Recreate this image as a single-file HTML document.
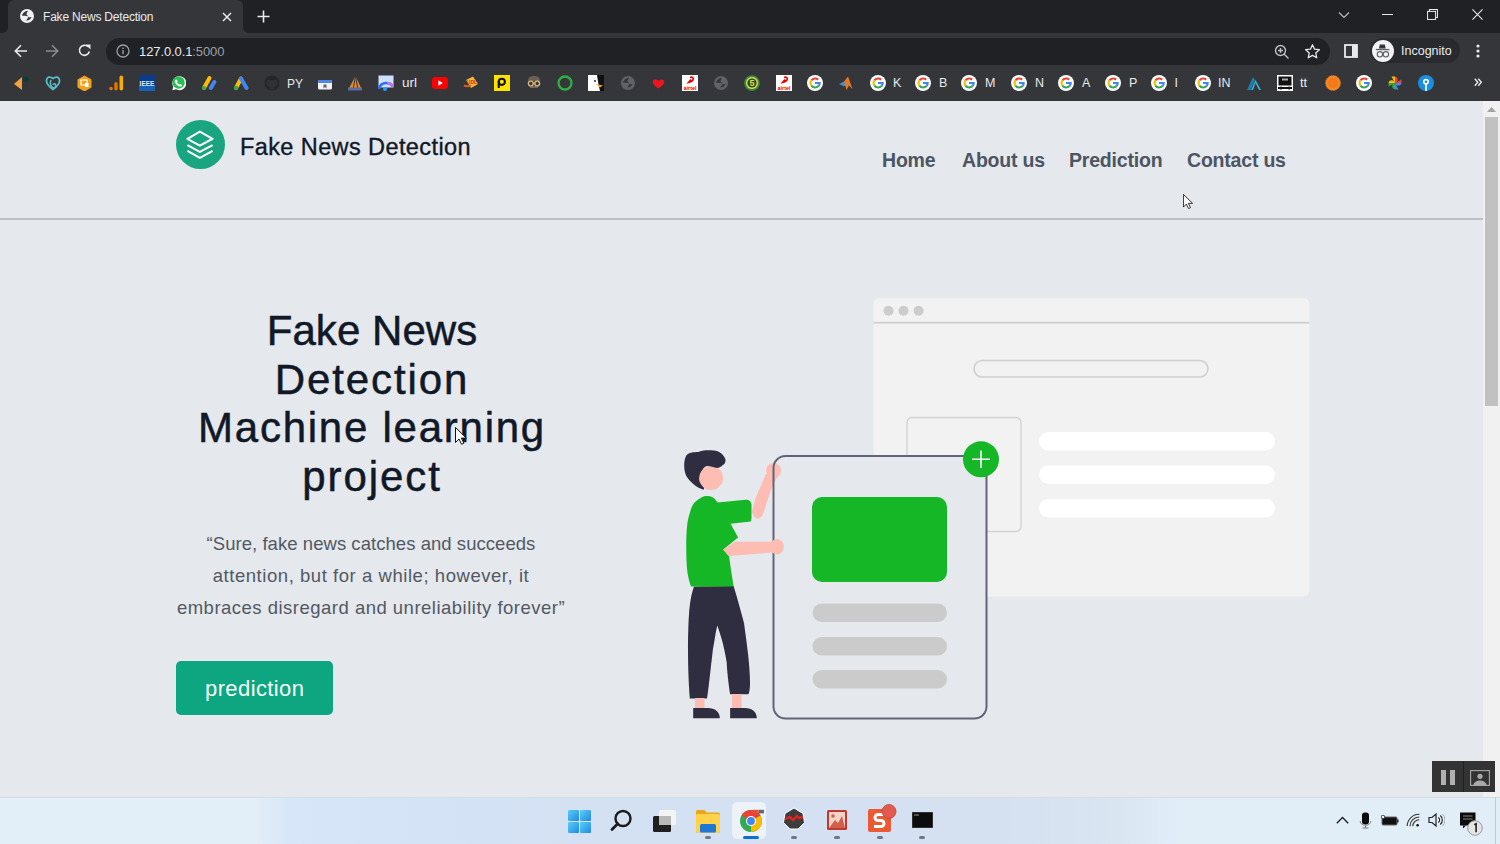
<!DOCTYPE html>
<html><head><meta charset="utf-8">
<style>
*{margin:0;padding:0;box-sizing:border-box}
html,body{width:1500px;height:844px;overflow:hidden;background:#e5e8ec;font-family:"Liberation Sans",sans-serif}
.a{position:absolute}
.t{white-space:nowrap;line-height:1}
#tabs{left:0;top:0;width:1500px;height:34px;background:#202124}
#tab{left:7.6px;top:0;width:235.4px;height:34px;background:#35363a;border-radius:6px 6px 0 0}
#toolbar{left:0;top:33.3px;width:1500px;height:67.7px;background:#35363a}
#omni{left:106px;top:37.5px;width:1224px;height:27px;background:#202124;border-radius:13.5px}
#page{left:0;top:101px;width:1483px;height:696px;background:#e5e8ec;overflow:hidden}
#sb{left:1483px;top:101px;width:17px;height:696px;background:#f1f1f1}
#taskbar{left:0;top:797px;width:1500px;height:47px;background:linear-gradient(90deg,#e2eef8 0px,#e2eef8 255px,#d7e6f8 290px,#d4e3f6 420px,#d4e1f3 600px,#d5e1f1 1000px,#dae5f2 1120px,#e1eef8 1180px,#e1eef8 1500px);border-top:1px solid #d5dde3}
.nav{top:50.3px;font-size:19.5px;font-weight:bold;color:#4b5563;letter-spacing:-0.2px}
.h1{left:172px;width:400px;text-align:center;font-size:42px;line-height:48.67px;color:#111827;-webkit-text-stroke:0.5px #111827;white-space:nowrap}
.q{left:171px;width:400px;text-align:center;font-size:18.5px;line-height:32px;color:#525965;white-space:nowrap}
.bk{top:75px;width:16px;height:16px}
.bt{top:76px;font-size:13px;color:#e8eaed}
</style></head>
<body>
<!-- Tab strip -->
<div id="tabs" class="a"></div>
<div class="a" style="left:0;top:24px;width:252px;height:12px;background:#35363a"></div>
<div class="a" style="left:-12px;top:0;width:19.6px;height:33px;background:#202124;border-radius:0 0 6px 0"></div>
<div class="a" style="left:243px;top:0;width:1270px;height:33.3px;background:#202124;border-radius:0 0 0 6px"></div>
<div id="tab" class="a"></div>
<!-- tab favicon globe -->
<svg class="a" style="left:19.2px;top:8.3px" width="16" height="16" viewBox="0 0 16 16"><circle cx="8" cy="8" r="7" fill="#eef0f1"/><path d="M3.0 7.8C3.3 5.4 5.6 3.2 9.0 2.8 8.6 3.9 7.5 5.0 7.5 6.0 7.5 7.0 8.9 7.6 9.4 8.8 8.4 8.2 6.8 7.7 3.0 7.8z" fill="#35363a"/><path d="M7.0 12.6C7.9 11.6 8.8 10.4 9.0 9.2 10.3 9.3 11.6 9.1 12.5 8.9 12.1 10.8 10.2 12.4 7.0 12.6z" fill="#35363a"/></svg>
<div class="a t" style="left:43px;top:11px;font-size:12px;letter-spacing:-0.2px;color:#e8eaed">Fake News Detection</div>
<svg class="a" style="left:222px;top:12px" width="10" height="10" viewBox="0 0 10 10"><path d="M1 1L9 9M9 1L1 9" stroke="#e8eaed" stroke-width="1.5"/></svg>
<svg class="a" style="left:257px;top:10px" width="13" height="13" viewBox="0 0 13 13"><path d="M6.5 0.5v12M0.5 6.5h12" stroke="#e8eaed" stroke-width="1.6"/></svg>
<!-- window controls -->
<svg class="a" style="left:1337.5px;top:10.5px" width="12" height="8" viewBox="0 0 12 8"><path d="M1 1.5l5 5 5-5" stroke="#b8bcc0" stroke-width="1.2" fill="none"/></svg>
<div class="a" style="left:1382px;top:14px;width:11px;height:1px;background:#e8eaed"></div>
<svg class="a" style="left:1427px;top:9px" width="11" height="11" viewBox="0 0 12 12"><rect x="0.6" y="2.6" width="8.8" height="8.8" fill="none" stroke="#e8eaed" stroke-width="1.1"/><path d="M2.6 2.6V0.6h8.8v8.8H9.4" fill="none" stroke="#e8eaed" stroke-width="1.1"/></svg>
<svg class="a" style="left:1472.3px;top:9px" width="11" height="11" viewBox="0 0 12 12"><path d="M0.5 0.5l11 11M11.5 0.5l-11 11" stroke="#e8eaed" stroke-width="1.2"/></svg>

<div id="toolbar" class="a"></div>
<!-- nav buttons -->
<svg class="a" style="left:14px;top:44px" width="14" height="14" viewBox="0 0 14 14"><path d="M13 7H1.5M7 1.2L1.3 7 7 12.8" stroke="#e8eaed" stroke-width="1.6" fill="none"/></svg>
<svg class="a" style="left:45px;top:44px" width="14" height="14" viewBox="0 0 14 14"><path d="M1 7h11.5M7 1.2L12.7 7 7 12.8" stroke="#8a8c90" stroke-width="1.6" fill="none"/></svg>
<svg class="a" style="left:77px;top:43px" width="15" height="15" viewBox="0 0 15 15"><path d="M12.3 8.5A5 5 0 1 1 11 3.8" stroke="#e8eaed" stroke-width="1.6" fill="none"/><path d="M8.5 1.5h5v5z" fill="#e8eaed"/></svg>
<div id="omni" class="a"></div>
<svg class="a" style="left:116px;top:44px" width="14" height="14" viewBox="0 0 14 14"><circle cx="7" cy="7" r="6" fill="none" stroke="#9aa0a6" stroke-width="1.3"/><rect x="6.3" y="6" width="1.4" height="4.2" fill="#9aa0a6"/><rect x="6.3" y="3.6" width="1.4" height="1.4" fill="#9aa0a6"/></svg>
<div class="a t" style="left:139px;top:44.6px;font-size:13px;letter-spacing:-0.1px;color:#e8eaed">127.0.0.1<span style="color:#9aa0a6">:5000</span></div>
<svg class="a" style="left:1273.5px;top:43.5px" width="16" height="16" viewBox="0 0 16 16"><circle cx="6.5" cy="6.5" r="5" fill="none" stroke="#bdc1c6" stroke-width="1.4"/><path d="M10 10l4.5 4.5M6.5 4v5M4 6.5h5" stroke="#bdc1c6" stroke-width="1.4"/></svg>
<svg class="a" style="left:1304px;top:43px" width="17" height="17" viewBox="0 0 24 24"><path d="M12 2.5l2.9 6.3 6.8.7-5.1 4.6 1.4 6.8L12 17.4l-6 3.5 1.4-6.8-5.1-4.6 6.8-.7z" fill="none" stroke="#e8eaed" stroke-width="1.8" stroke-linejoin="round"/></svg>
<svg class="a" style="left:1344px;top:44px" width="14" height="14" viewBox="0 0 14 14"><rect x="1" y="1" width="12" height="12" fill="none" stroke="#e8eaed" stroke-width="1.8"/><rect x="8" y="1" width="5" height="12" fill="#e8eaed"/></svg>
<div class="a" style="left:1370px;top:38px;width:90px;height:25px;border-radius:13px;background:#292a2d"></div>
<div class="a" style="left:1371.7px;top:39.9px;width:22px;height:22px;border-radius:50%;background:#f1f3f4"></div>
<svg class="a" style="left:1372px;top:40px" width="22" height="22" viewBox="1372 40 22 22"><path d="M1378.9 48.6l.9-4.2h5l.9 4.2z" fill="#35363a"/><rect x="1375.9" y="48.9" width="13.5" height="1.3" fill="#5f6368"/><circle cx="1379.9" cy="54.3" r="2.7" fill="none" stroke="#5f6368" stroke-width="1.1"/><circle cx="1385.9" cy="54.3" r="2.7" fill="none" stroke="#5f6368" stroke-width="1.1"/></svg>
<div class="a t" style="left:1401px;top:44.5px;font-size:12.5px;color:#e8eaed">Incognito</div>
<svg class="a" style="left:1475px;top:43px" width="6" height="16" viewBox="0 0 6 16"><circle cx="3" cy="3" r="1.6" fill="#e8eaed"/><circle cx="3" cy="8" r="1.6" fill="#e8eaed"/><circle cx="3" cy="13" r="1.6" fill="#e8eaed"/></svg>

<!-- bookmarks bar -->
<svg class="a" style="left:13px;top:75px" width="16" height="16" viewBox="0 0 16 16"><path d="M9 2L1 9l8 6z" fill="#f7a13b"/><circle cx="13" cy="4" r="2.6" fill="#0d3b3b"/></svg>
<svg class="a" style="left:45px;top:75px" width="16" height="16" viewBox="0 0 16 16"><path d="M8 14.5C3 11 1 8 1.5 5 2 2 5 1 8 3.5 11 1 14 2 14.5 5 15 8 13 11 8 14.5z" fill="none" stroke="#56c1c8" stroke-width="1.7"/><path d="M6 5c-1 2-1 6 1.5 7.5 2 .8 3.5-.8 3.3-2.3-.3-1.8-2.5-1.7-2.8-.4" fill="none" stroke="#56c1c8" stroke-width="1.5"/></svg>
<svg class="a" style="left:77px;top:75px" width="16" height="16" viewBox="0 0 16 16"><path d="M7.5 0.5l7 4v8l-7 4-7-4v-8z" fill="#f0a21c"/><rect x="4" y="5" width="6" height="5" fill="none" stroke="#fff" stroke-width="1.1"/><rect x="8" y="8" width="3.5" height="4" fill="#fff"/></svg>
<svg class="a" style="left:109px;top:75px" width="16" height="16" viewBox="0 0 16 16"><circle cx="2" cy="13.5" r="1.8" fill="#e37400"/><rect x="5.3" y="7" width="3.4" height="8.5" rx="1.7" fill="#e37400"/><rect x="10.5" y="0.5" width="3.6" height="15" rx="1.8" fill="#f9ab00"/></svg>
<svg class="a" style="left:139px;top:75px" width="16" height="16" viewBox="0 0 16 16"><rect x="0" y="0" width="16" height="16" fill="#0b3b8c"/><rect x="0" y="10" width="16" height="6" fill="#1760b5"/><text x="8" y="10.5" font-size="6.5" font-family="Liberation Sans" font-weight="bold" text-anchor="middle" fill="#dfe8ff">IEEE</text></svg>
<svg class="a" style="left:170px;top:75px" width="16" height="16" viewBox="0 0 16 16"><path d="M2.3 15.2l1-3.5A7 7 0 1 1 6 14.3z" fill="#fff"/><circle cx="8.6" cy="7.6" r="6.1" fill="#25c151"/><path d="M5.8 4.8c.5-.4 1-.3 1.2.2l.6 1.3c.1.4-.4.8-.5 1 .5 1 1.2 1.8 2.3 2.3.3-.2.6-.7 1-.5l1.3.6c.4.2.5.7.1 1.2-.8.9-2 .9-3.2.3C6.7 10 5.3 8.5 4.9 7c-.3-1 .1-1.8.9-2.2z" fill="#fff"/></svg>
<svg class="a" style="left:201px;top:75px" width="16" height="16" viewBox="0 0 16 16"><path d="M3 13L8.5 3" stroke="#fbbc04" stroke-width="4" stroke-linecap="round"/><path d="M9.8 13l3.5-6" stroke="#4285f4" stroke-width="4" stroke-linecap="round"/><circle cx="3" cy="13" r="2" fill="#34a853"/></svg>
<svg class="a" style="left:233px;top:75px" width="16" height="16" viewBox="0 0 16 16"><path d="M3 13L8 3.5" stroke="#fbbc04" stroke-width="4" stroke-linecap="round"/><path d="M8 3.5L13.5 13" stroke="#4285f4" stroke-width="4" stroke-linecap="round"/><circle cx="3" cy="13" r="2.2" fill="#34a853"/></svg>
<svg class="a" style="left:264px;top:75px" width="16" height="16" viewBox="0 0 16 16"><circle cx="8" cy="8" r="7.5" fill="#242526"/><path d="M5.5 14.5v-2.5c-1.5-.2-3-1-3-3.5 0-.8.3-1.5.8-2-.1-.5-.1-1.2.2-2 1 0 1.6.5 2 .8a6 6 0 0 1 5 0c.4-.3 1-.8 2-.8.3.8.3 1.5.2 2 .5.5.8 1.2.8 2 0 2.5-1.5 3.3-3 3.5v2.5" fill="#303134"/></svg>
<div class="a t" style="left:287px;top:77.5px;font-size:12px;color:#e8eaed">PY</div>
<svg class="a" style="left:317px;top:75px" width="16" height="16" viewBox="0 0 16 16"><rect x="1" y="5" width="14" height="9.5" rx="1.5" fill="#f1f3f4"/><rect x="1" y="5" width="14" height="3" rx="1" fill="#4f86e6"/><path d="M6.5 9.5v4l1.5-1.5 1.5 1.5v-4" fill="#5f6368"/></svg>
<svg class="a" style="left:347px;top:75px" width="16" height="16" viewBox="0 0 16 16"><path d="M1 15L8.5 1l6.5 14z" fill="#e4852a"/><path d="M8.5 1L6 15M8.5 1l2.5 14" stroke="#35363a" stroke-width="1"/><rect x="1" y="12.5" width="14" height="3" fill="#5b6da3"/></svg>
<svg class="a" style="left:378px;top:75px" width="16" height="16" viewBox="0 0 16 16"><rect x="0.5" y="0.5" width="15" height="12" fill="#cfe1ff"/><path d="M1 14A7.5 7.5 0 0 1 15 12" stroke="#2a6ef5" stroke-width="2.6" fill="none"/><path d="M9 8.5A5.5 5.5 0 0 1 15 12" stroke="#c372f0" stroke-width="2.6" fill="none"/><circle cx="7" cy="14" r="2" fill="#1fa3ff"/></svg>
<div class="a t" style="left:402px;top:76px;font-size:13.5px;color:#e8eaed">url</div>
<svg class="a" style="left:432px;top:75px" width="16" height="16" viewBox="0 0 16 16"><rect x="0" y="2" width="16" height="12" rx="3.5" fill="#ff0000"/><path d="M6.3 5.2l4.5 2.8-4.5 2.8z" fill="#fff"/></svg>
<svg class="a" style="left:463px;top:75px" width="16" height="16" viewBox="0 0 16 16"><path d="M3 5L10 1.5 15 9 8 13z" fill="#f9b63a"/><path d="M1 10.5c2 1 4 1 7 0" stroke="#e05a1a" stroke-width="2" fill="none"/><text x="9" y="9" font-size="5" fill="#d0301a" font-family="Liberation Sans" font-weight="bold" text-anchor="middle">UDL</text></svg>
<svg class="a" style="left:494px;top:75px" width="16" height="16" viewBox="0 0 16 16"><rect x="0" y="0" width="16" height="16" fill="#ffe100"/><circle cx="7.8" cy="6.8" r="3.1" fill="none" stroke="#111" stroke-width="2"/><rect x="3.7" y="6" width="2.1" height="7" fill="#111"/></svg>
<svg class="a" style="left:526px;top:75px" width="16" height="16" viewBox="0 0 16 16"><path d="M2 6c0-4 3-5 6-5s6 1 6 5" fill="#6b6257"/><circle cx="4.8" cy="8.5" r="2.4" fill="none" stroke="#d9b57a" stroke-width="1.4"/><circle cx="11.2" cy="8.5" r="2.4" fill="none" stroke="#d9b57a" stroke-width="1.4"/><path d="M7 8.5h2" stroke="#d9b57a" stroke-width="1.2"/><path d="M4 12h8" stroke="#a88e62" stroke-width="1.2"/></svg>
<svg class="a" style="left:557px;top:75px" width="16" height="16" viewBox="0 0 16 16"><circle cx="8" cy="8" r="6.5" fill="none" stroke="#2fae44" stroke-width="2.3"/></svg>
<svg class="a" style="left:588px;top:75px" width="16" height="16" viewBox="0 0 16 16"><rect x="0" y="0" width="16" height="16" fill="#fff"/><path d="M9 0h7v16H12C11 12 10 7 9 0z" fill="#111"/><path d="M8 9l7 1.5-3 2z" fill="#f1a225"/><circle cx="7" cy="6" r="0.9" fill="#111"/></svg>
<svg class="a" style="left:620px;top:75px" width="16" height="16" viewBox="0 0 16 16"><circle cx="8" cy="8" r="7" fill="#5f6368"/><path d="M3.0 7.8C3.3 5.4 5.6 3.2 9.0 2.8 8.6 3.9 7.5 5.0 7.5 6.0 7.5 7.0 8.9 7.6 9.4 8.8 8.4 8.2 6.8 7.7 3.0 7.8z" fill="#35363a"/><path d="M7.0 12.6C7.9 11.6 8.8 10.4 9.0 9.2 10.3 9.3 11.6 9.1 12.5 8.9 12.1 10.8 10.2 12.4 7.0 12.6z" fill="#35363a"/></svg>
<svg class="a" style="left:652px;top:77.5px" width="13" height="11" viewBox="0 0 13 11"><path d="M6.5 10.5C2.3 7.6 0.6 5.8 0.8 3.7 1 1.5 3.8 0.6 6.5 2.8c2.7-2.2 5.5-1.3 5.7.9.2 2.1-1.5 3.9-5.7 6.8z" fill="#f0141e"/></svg>
<svg class="a" style="left:682px;top:75px" width="16" height="16" viewBox="0 0 16 16"><rect x="0" y="0" width="16" height="16" fill="#fff"/><path d="M8 2.5c2.5-1 4 .5 3 2.5-.8 1.4-3 2.2-4.5 2.5l2.5-3" stroke="#e40000" stroke-width="1.6" fill="none"/><text x="8" y="14.5" font-size="5.4" font-weight="bold" font-family="Liberation Sans" text-anchor="middle" fill="#e40000">airtel</text></svg>
<svg class="a" style="left:713px;top:75px" width="16" height="16" viewBox="0 0 16 16"><circle cx="8" cy="8" r="7" fill="#5f6368"/><path d="M3.0 7.8C3.3 5.4 5.6 3.2 9.0 2.8 8.6 3.9 7.5 5.0 7.5 6.0 7.5 7.0 8.9 7.6 9.4 8.8 8.4 8.2 6.8 7.7 3.0 7.8z" fill="#35363a"/><path d="M7.0 12.6C7.9 11.6 8.8 10.4 9.0 9.2 10.3 9.3 11.6 9.1 12.5 8.9 12.1 10.8 10.2 12.4 7.0 12.6z" fill="#35363a"/></svg>
<svg class="a" style="left:744px;top:75px" width="16" height="16" viewBox="0 0 16 16"><circle cx="8" cy="8" r="7.8" fill="#3a8f3f"/><circle cx="8" cy="8" r="6" fill="#e8d84a"/><circle cx="8" cy="8" r="4.6" fill="#1e4d2a"/><text x="8" y="11.3" font-size="9" font-weight="bold" font-family="Liberation Sans" text-anchor="middle" fill="#e8d84a">5</text></svg>
<svg class="a" style="left:775.5px;top:75px" width="16" height="16" viewBox="0 0 16 16"><rect x="0" y="0" width="16" height="16" fill="#fff"/><path d="M8 2.5c2.5-1 4 .5 3 2.5-.8 1.4-3 2.2-4.5 2.5l2.5-3" stroke="#e40000" stroke-width="1.6" fill="none"/><text x="8" y="14.5" font-size="5.4" font-weight="bold" font-family="Liberation Sans" text-anchor="middle" fill="#e40000">airtel</text></svg>
<svg class="a" style="left:807px;top:75px" width="16" height="16" viewBox="0 0 16 16"><circle cx="8" cy="8" r="8" fill="#fff"/><path d="M11.2 4.6A4.7 4.7 0 0 0 4.4 5.4" stroke="#ea4335" stroke-width="2.1" fill="none"/><path d="M4.4 5.4A4.7 4.7 0 0 0 4.4 10.6" stroke="#fbbc05" stroke-width="2.1" fill="none"/><path d="M4.4 10.6A4.7 4.7 0 0 0 11.6 11" stroke="#34a853" stroke-width="2.1" fill="none"/><path d="M11.6 11A4.7 4.7 0 0 0 12.7 8H8" stroke="#4285f4" stroke-width="2.1" fill="none"/></svg>
<svg class="a" style="left:838px;top:75px" width="16" height="16" viewBox="0 0 16 16"><path d="M1 9l5-2.5 3 2-3 3z" fill="#3f8fd6"/><path d="M6 6.5L10 1.5 14.5 14 11 10.5 8.5 15z" fill="#e87a1e"/></svg>
<svg class="a" style="left:870px;top:75px" width="16" height="16" viewBox="0 0 16 16"><circle cx="8" cy="8" r="8" fill="#fff"/><path d="M11.2 4.6A4.7 4.7 0 0 0 4.4 5.4" stroke="#ea4335" stroke-width="2.1" fill="none"/><path d="M4.4 5.4A4.7 4.7 0 0 0 4.4 10.6" stroke="#fbbc05" stroke-width="2.1" fill="none"/><path d="M4.4 10.6A4.7 4.7 0 0 0 11.6 11" stroke="#34a853" stroke-width="2.1" fill="none"/><path d="M11.6 11A4.7 4.7 0 0 0 12.7 8H8" stroke="#4285f4" stroke-width="2.1" fill="none"/></svg>
<div class="a t" style="left:893px;top:76.5px;font-size:12.5px;color:#e8eaed">K</div>
<svg class="a" style="left:915px;top:75px" width="16" height="16" viewBox="0 0 16 16"><circle cx="8" cy="8" r="8" fill="#fff"/><path d="M11.2 4.6A4.7 4.7 0 0 0 4.4 5.4" stroke="#ea4335" stroke-width="2.1" fill="none"/><path d="M4.4 5.4A4.7 4.7 0 0 0 4.4 10.6" stroke="#fbbc05" stroke-width="2.1" fill="none"/><path d="M4.4 10.6A4.7 4.7 0 0 0 11.6 11" stroke="#34a853" stroke-width="2.1" fill="none"/><path d="M11.6 11A4.7 4.7 0 0 0 12.7 8H8" stroke="#4285f4" stroke-width="2.1" fill="none"/></svg>
<div class="a t" style="left:939px;top:76.5px;font-size:12.5px;color:#e8eaed">B</div>
<svg class="a" style="left:961px;top:75px" width="16" height="16" viewBox="0 0 16 16"><circle cx="8" cy="8" r="8" fill="#fff"/><path d="M11.2 4.6A4.7 4.7 0 0 0 4.4 5.4" stroke="#ea4335" stroke-width="2.1" fill="none"/><path d="M4.4 5.4A4.7 4.7 0 0 0 4.4 10.6" stroke="#fbbc05" stroke-width="2.1" fill="none"/><path d="M4.4 10.6A4.7 4.7 0 0 0 11.6 11" stroke="#34a853" stroke-width="2.1" fill="none"/><path d="M11.6 11A4.7 4.7 0 0 0 12.7 8H8" stroke="#4285f4" stroke-width="2.1" fill="none"/></svg>
<div class="a t" style="left:985px;top:76.5px;font-size:12.5px;color:#e8eaed">M</div>
<svg class="a" style="left:1011px;top:75px" width="16" height="16" viewBox="0 0 16 16"><circle cx="8" cy="8" r="8" fill="#fff"/><path d="M11.2 4.6A4.7 4.7 0 0 0 4.4 5.4" stroke="#ea4335" stroke-width="2.1" fill="none"/><path d="M4.4 5.4A4.7 4.7 0 0 0 4.4 10.6" stroke="#fbbc05" stroke-width="2.1" fill="none"/><path d="M4.4 10.6A4.7 4.7 0 0 0 11.6 11" stroke="#34a853" stroke-width="2.1" fill="none"/><path d="M11.6 11A4.7 4.7 0 0 0 12.7 8H8" stroke="#4285f4" stroke-width="2.1" fill="none"/></svg>
<div class="a t" style="left:1035px;top:76.5px;font-size:12.5px;color:#e8eaed">N</div>
<svg class="a" style="left:1058px;top:75px" width="16" height="16" viewBox="0 0 16 16"><circle cx="8" cy="8" r="8" fill="#fff"/><path d="M11.2 4.6A4.7 4.7 0 0 0 4.4 5.4" stroke="#ea4335" stroke-width="2.1" fill="none"/><path d="M4.4 5.4A4.7 4.7 0 0 0 4.4 10.6" stroke="#fbbc05" stroke-width="2.1" fill="none"/><path d="M4.4 10.6A4.7 4.7 0 0 0 11.6 11" stroke="#34a853" stroke-width="2.1" fill="none"/><path d="M11.6 11A4.7 4.7 0 0 0 12.7 8H8" stroke="#4285f4" stroke-width="2.1" fill="none"/></svg>
<div class="a t" style="left:1082px;top:76.5px;font-size:12.5px;color:#e8eaed">A</div>
<svg class="a" style="left:1105px;top:75px" width="16" height="16" viewBox="0 0 16 16"><circle cx="8" cy="8" r="8" fill="#fff"/><path d="M11.2 4.6A4.7 4.7 0 0 0 4.4 5.4" stroke="#ea4335" stroke-width="2.1" fill="none"/><path d="M4.4 5.4A4.7 4.7 0 0 0 4.4 10.6" stroke="#fbbc05" stroke-width="2.1" fill="none"/><path d="M4.4 10.6A4.7 4.7 0 0 0 11.6 11" stroke="#34a853" stroke-width="2.1" fill="none"/><path d="M11.6 11A4.7 4.7 0 0 0 12.7 8H8" stroke="#4285f4" stroke-width="2.1" fill="none"/></svg>
<div class="a t" style="left:1129px;top:76.5px;font-size:12.5px;color:#e8eaed">P</div>
<svg class="a" style="left:1151px;top:75px" width="16" height="16" viewBox="0 0 16 16"><circle cx="8" cy="8" r="8" fill="#fff"/><path d="M11.2 4.6A4.7 4.7 0 0 0 4.4 5.4" stroke="#ea4335" stroke-width="2.1" fill="none"/><path d="M4.4 5.4A4.7 4.7 0 0 0 4.4 10.6" stroke="#fbbc05" stroke-width="2.1" fill="none"/><path d="M4.4 10.6A4.7 4.7 0 0 0 11.6 11" stroke="#34a853" stroke-width="2.1" fill="none"/><path d="M11.6 11A4.7 4.7 0 0 0 12.7 8H8" stroke="#4285f4" stroke-width="2.1" fill="none"/></svg>
<div class="a t" style="left:1174.5px;top:76.5px;font-size:12.5px;color:#e8eaed">I</div>
<svg class="a" style="left:1194.5px;top:75px" width="16" height="16" viewBox="0 0 16 16"><circle cx="8" cy="8" r="8" fill="#fff"/><path d="M11.2 4.6A4.7 4.7 0 0 0 4.4 5.4" stroke="#ea4335" stroke-width="2.1" fill="none"/><path d="M4.4 5.4A4.7 4.7 0 0 0 4.4 10.6" stroke="#fbbc05" stroke-width="2.1" fill="none"/><path d="M4.4 10.6A4.7 4.7 0 0 0 11.6 11" stroke="#34a853" stroke-width="2.1" fill="none"/><path d="M11.6 11A4.7 4.7 0 0 0 12.7 8H8" stroke="#4285f4" stroke-width="2.1" fill="none"/></svg>
<div class="a t" style="left:1218px;top:76.5px;font-size:12.5px;color:#e8eaed">IN</div>
<svg class="a" style="left:1246px;top:75px" width="16" height="16" viewBox="0 0 16 16"><path d="M1 15L7 2l2 3-4.5 10z" fill="#1d7fa8"/><path d="M5 15l4.5-10L15 15h-2l-3.5-7L7 15z" fill="#3bb0d8"/></svg>
<svg class="a" style="left:1277px;top:75px" width="16" height="16" viewBox="0 0 16 16"><rect x="0" y="0" width="16" height="16" fill="#fff"/><rect x="1.5" y="1.5" width="13" height="9" fill="#111"/><rect x="5" y="3.5" width="6" height="2" fill="#aaa"/><path d="M1 13h14" stroke="#111" stroke-width="2"/><circle cx="4" cy="13" r="1.5" fill="#111"/><circle cx="12" cy="13" r="1.5" fill="#111"/></svg>
<div class="a t" style="left:1300px;top:76px;font-size:13px;color:#e8eaed">tt</div>
<svg class="a" style="left:1325px;top:75px" width="16" height="16" viewBox="0 0 16 16"><circle cx="8" cy="8" r="7.5" fill="#f08a24" stroke="#d96b18" stroke-width="1" stroke-dasharray="1.5 1"/><circle cx="8" cy="8" r="5.2" fill="#f27a1a"/></svg>
<svg class="a" style="left:1356px;top:75px" width="16" height="16" viewBox="0 0 16 16"><circle cx="8" cy="8" r="8" fill="#fff"/><path d="M11.2 4.6A4.7 4.7 0 0 0 4.4 5.4" stroke="#ea4335" stroke-width="2.1" fill="none"/><path d="M4.4 5.4A4.7 4.7 0 0 0 4.4 10.6" stroke="#fbbc05" stroke-width="2.1" fill="none"/><path d="M4.4 10.6A4.7 4.7 0 0 0 11.6 11" stroke="#34a853" stroke-width="2.1" fill="none"/><path d="M11.6 11A4.7 4.7 0 0 0 12.7 8H8" stroke="#4285f4" stroke-width="2.1" fill="none"/></svg>
<svg class="a" style="left:1387px;top:75px" width="16" height="16" viewBox="0 0 16 16"><path d="M8 8V1.5A3.3 3.3 0 0 1 8 8z" fill="#ea4335"/><path d="M8 8h6.5A3.3 3.3 0 0 1 8 8z" fill="#4285f4"/><path d="M8 8v6.5A3.3 3.3 0 0 1 8 8z" fill="#34a853"/><path d="M8 8H1.5A3.3 3.3 0 0 1 8 8z" fill="#fbbc04"/><path d="M8 8L4.5 1.5 8 1.5z" fill="#fbbc04"/><path d="M8 8L14.5 4.5V8z" fill="#ea4335"/><path d="M8 8l3.5 6.5H8z" fill="#4285f4"/><path d="M8 8L1.5 11.5V8z" fill="#34a853"/></svg>
<svg class="a" style="left:1418px;top:75px" width="16" height="16" viewBox="0 0 16 16"><circle cx="8" cy="8" r="8" fill="#1a8fe0"/><circle cx="8" cy="6.8" r="3" fill="#fff"/><rect x="7.2" y="7" width="1.6" height="9" fill="#fff"/><circle cx="8" cy="6.8" r="1.4" fill="#1a8fe0"/></svg>
<svg class="a" style="left:1474px;top:78px" width="8" height="9" viewBox="0 0 8 9"><path d="M0.8 0.8l3 3.5-3 3.5M4.3 0.8l3 3.5-3 3.5" stroke="#e8eaed" stroke-width="1.4" fill="none"/></svg>


<div id="page" class="a">
  <!-- header -->
  <div class="a" style="left:176px;top:19px;width:49px;height:49px;border-radius:50%;background:#19a580"></div>
  <svg class="a" style="left:185px;top:28px" width="31" height="31" viewBox="0 0 31 31"><path d="M14.9 2.6L27.6 9.8 14.9 16.6 2.4 9.8z" fill="none" stroke="#fff" stroke-width="2.1" stroke-linejoin="round"/><path d="M2.4 16.1l12.5 6.8 12.7-6.8M2.4 21.9l12.5 6.9 12.7-6.9" fill="none" stroke="#fff" stroke-width="2.1" stroke-linejoin="round"/></svg>
  <div class="a t" id="brand" style="left:240px;top:35px;font-size:23.5px;letter-spacing:0.4px;color:#111827;-webkit-text-stroke:0.35px #111827">Fake News Detection</div>
  <div class="a t nav" style="left:882px">Home</div>
  <div class="a t nav" style="left:962px">About us</div>
  <div class="a t nav" style="left:1069px">Prediction</div>
  <div class="a t nav" style="left:1187px">Contact us</div>
  <div class="a" style="left:0;top:117px;width:1483px;height:2px;background:#bcc0c3"></div>

  <!-- hero -->
  <div class="a h1" id="h1a" style="top:206px;letter-spacing:0.05px">Fake News</div>
  <div class="a h1" id="h1b" style="top:254.67px;letter-spacing:1.9px">Detection</div>
  <div class="a h1" id="h1c" style="top:303.33px;letter-spacing:1.75px">Machine learning</div>
  <div class="a h1" id="h1d" style="top:352px;letter-spacing:1.95px">project</div>
  <div class="a q" id="q1" style="top:427.3px;letter-spacing:0.05px">“Sure, fake news catches and succeeds</div>
  <div class="a q" id="q2" style="top:459.3px;letter-spacing:0.55px">attention, but for a while; however, it</div>
  <div class="a q" id="q3" style="top:491.3px;letter-spacing:0.49px">embraces disregard and unreliability forever”</div>
  <div class="a" style="left:176px;top:560px;width:157px;height:54px;border-radius:5px;background:#0ea581"></div>
  <div class="a t" id="btn" style="left:205px;top:577px;font-size:22px;letter-spacing:0.4px;color:#f4fff8">prediction</div>

  <!-- illustration -->
  <svg class="a" style="left:0;top:0" width="1483" height="696" viewBox="0 101 1483 696">
    <!-- browser window -->
    <rect x="873.5" y="298" width="436" height="298.5" rx="6" fill="#f2f2f2"/>
    <rect x="873.5" y="321.8" width="436" height="1.8" fill="#cfcfcf"/>
    <circle cx="888.5" cy="310.8" r="5" fill="#cccccc"/>
    <circle cx="903.5" cy="310.8" r="5" fill="#cccccc"/>
    <circle cx="918.6" cy="310.8" r="5" fill="#cccccc"/>
    <rect x="974" y="360.5" width="234" height="16.5" rx="8.25" fill="none" stroke="#cfcfcf" stroke-width="1.6"/>
    <rect x="907" y="417.5" width="114" height="114" rx="5" fill="none" stroke="#d2d2d2" stroke-width="1.3"/>
    <rect x="1039" y="432" width="236" height="18.5" rx="9.25" fill="#ffffff"/>
    <rect x="1039" y="465.5" width="236" height="18.5" rx="9.25" fill="#ffffff"/>
    <rect x="1039" y="499" width="236" height="18.5" rx="9.25" fill="#ffffff"/>
    <!-- card -->
    <rect x="773.5" y="456" width="213" height="262.5" rx="12" fill="#e5e8ec"/>
    <!-- person -->
    <path d="M694 586.5 L733.6 586 C738 600 741 612 744 623 C747 645 750 665 750 683 C750 690 749 694 748 694.3 L730.1 694.3 C728 680 727 670 726.7 662.5 C724 645 720 633 717.3 625.5 C715 635 714 645 713 648.7 C711 665 709 685 707 698.6 L689.8 698.6 C688.5 680 688 665 688 648.7 C688 635 688.5 620 689 614.4 C690 600 692 592 694 586.5z" fill="#2f2e41"/>
    <rect x="695" y="698" width="9.5" height="10.5" fill="#fdbdb3"/>
    <rect x="732" y="694" width="9.5" height="14.5" fill="#fdbdb3"/>
    <path d="M693.2 718.3V708H708C715 708 719.8 712 719.8 718.3z" fill="#2f2e41"/>
    <path d="M730.1 718.3V708H745C752 708 756.8 712 756.8 718.3z" fill="#2f2e41"/>
    <path d="M752 511 C753 517 756 519 758.5 518.5 C761 518 763 515 764 511 L768.5 497 L773 485 L779 474 L766 474 L756 497z" fill="#fdbdb3"/>
    <circle cx="773.6" cy="470.5" r="7.5" fill="#fdbdb3"/>
    <path d="M694.6 502.5 C700 497 705 495.5 708 496 C712 496.5 715 498 717.4 502.5 L745.8 499.7 C749 499.5 751 501 751.5 504.4 L751.5 518 C751.5 520 751 521 750.6 521.4 L730.6 523.8 L738.1 537.4 L723.2 549.5 L729 556 L730.3 565 L733.6 586.5 L691 586.5 C688 578 686.5 570 686.3 553 C686 535 687 522 689 515.8 C690.5 510 692 505 694.6 502.5z" fill="#15b727"/>
    <circle cx="711" cy="478" r="12" fill="#fdbdb3"/>
    <path d="M703.6 489.7 C697 488 690 482 686.3 476 C683.5 470 683.5 460 686.3 455.5 C688.5 452.5 693 452 698.5 452 C701 450.5 706 449.8 713.8 450.4 C719 451 723 453.5 725.3 458.7 C726 462 724.5 464.5 722.8 465.1 C720.5 467.5 718.5 468 717.7 468 C713 467.5 709 465.5 706.8 466.1 C704.5 467 703.5 468 703 469 C700 472 699 476 699.1 479.8 C699.5 483 702 486 704.2 488.1z" fill="#2f2e41"/>
    <!-- card stroke -->
    <rect x="773.5" y="456" width="213" height="262.5" rx="12" fill="none" stroke="#63637a" stroke-width="2"/>
    <path d="M723.2 549.5 L735 541.8 L772 541.8 L772 552.5 L728.5 556z" fill="#fdbdb3"/>
    <ellipse cx="777" cy="546.8" rx="6.8" ry="7.7" fill="#fdbdb3"/>
    <rect x="812" y="497" width="135" height="85" rx="10" fill="#15b727"/>
    <rect x="812.5" y="603.5" width="134.5" height="18.5" rx="9.25" fill="#cbcbcb"/>
    <rect x="812.5" y="637" width="134.5" height="18.5" rx="9.25" fill="#cbcbcb"/>
    <rect x="812.5" y="670" width="134.5" height="18.5" rx="9.25" fill="#cbcbcb"/>
    <circle cx="981" cy="459.3" r="18" fill="#15b727"/>
    <path d="M981 450.5v17.6M972.2 459.3h17.6" stroke="#fff" stroke-width="1.6"/>
  </svg>
</div>

<div id="sb" class="a"></div>
<div class="a" style="left:1485px;top:117px;width:13px;height:289px;background:#c1c1c1"></div>
<svg class="a" style="left:1487px;top:107px" width="9" height="5" viewBox="0 0 9 5"><path d="M0 5L4.5 0 9 5z" fill="#a3a3a3"/></svg>

<!-- recorder overlay -->
<div class="a" style="left:1432px;top:761px;width:63px;height:31px;background:#333333"></div>
<div class="a" style="left:1463px;top:761px;width:1px;height:31px;background:#222"></div>
<div class="a" style="left:1440.5px;top:770px;width:5px;height:14.5px;background:#b0b0b0"></div>
<div class="a" style="left:1450px;top:770px;width:5px;height:14.5px;background:#b0b0b0"></div>
<svg class="a" style="left:1470px;top:769.5px" width="20" height="16" viewBox="0 0 20 16"><rect x="0.6" y="0.6" width="18.8" height="14.8" fill="none" stroke="#aaa" stroke-width="1.1"/><circle cx="10" cy="6.3" r="2.6" fill="#aaa"/><path d="M3 15.4c1-3.5 3.5-5 7-5s6 1.5 7 5z" fill="#aaa"/></svg>

<div id="taskbar" class="a"></div>
<svg class="a" style="left:568px;top:809.5px" width="23" height="23" viewBox="0 0 23 23"><defs><linearGradient id="wg" x1="0" y1="0" x2="1" y2="1"><stop offset="0" stop-color="#5dcdf6"/><stop offset="1" stop-color="#1f8ae0"/></linearGradient></defs><rect x="0" y="0" width="11" height="11" rx="1" fill="url(#wg)"/><rect x="12" y="0" width="11" height="11" rx="1" fill="url(#wg)"/><rect x="0" y="12" width="11" height="11" rx="1" fill="url(#wg)"/><rect x="12" y="12" width="11" height="11" rx="1" fill="url(#wg)"/></svg>
<svg class="a" style="left:610px;top:809px" width="23" height="24" viewBox="0 0 23 24"><circle cx="13" cy="9.5" r="7.5" fill="none" stroke="#1b1b1b" stroke-width="2.4"/><path d="M7.7 14.8L2 20.5" stroke="#1b1b1b" stroke-width="2.8" stroke-linecap="round"/></svg>
<svg class="a" style="left:652px;top:809px" width="26" height="24" viewBox="0 0 26 24"><rect x="7" y="1" width="17" height="15" rx="1.5" fill="#f4f4f4"/><rect x="1" y="7" width="18" height="16" rx="1.5" fill="#1f1f1f"/><rect x="7" y="7" width="12" height="9" fill="#b8b8b8"/></svg>
<svg class="a" style="left:695px;top:809px" width="26" height="24" viewBox="0 0 26 24"><path d="M1 2.5A1.5 1.5 0 0 1 2.5 1h7l2 2.5h12A1.5 1.5 0 0 1 25 5v17a1.5 1.5 0 0 1-1.5 1.5h-21A1.5 1.5 0 0 1 1 22z" fill="#e8a81a"/><rect x="1" y="5" width="24" height="18.5" rx="1.5" fill="#ffd24a"/><rect x="5" y="15" width="16" height="8.5" rx="1.5" fill="#1d78d3"/></svg>
<div class="a" style="left:732px;top:802px;width:34px;height:37px;border-radius:5px;background:#edf2f9"></div>
<svg class="a" style="left:739px;top:809px" width="26" height="24" viewBox="0 0 26 24"><circle cx="12" cy="12" r="11" fill="#34a853"/><path d="M12 12L2.5 6.5A11 11 0 0 1 21.5 6.5z" fill="#ea4335"/><path d="M12 12L21.5 6.5A11 11 0 0 1 12 23z" fill="#fbbc04"/><circle cx="12" cy="12" r="5" fill="#fff"/><circle cx="12" cy="12" r="3.9" fill="#4285f4"/><rect x="14" y="0.8" width="5.5" height="3.6" fill="#e84c3d"/><rect x="19.5" y="0.8" width="5.5" height="3.6" fill="#6a6a6a"/></svg>
<div class="a" style="left:743px;top:836px;width:16px;height:3px;border-radius:2px;background:#0f6cd1"></div>
<svg class="a" style="left:782px;top:807px" width="24" height="24" viewBox="0 0 24 24"><path d="M12 1l9 5.5 1.5 9L16 22H8l-6.5-6.5 1.5-9z" fill="#3d3d3d" stroke="#fff" stroke-width="1"/><path d="M3 12l5-2 3 3 4-4 2 2 4-1" stroke="#e42222" stroke-width="2.4" fill="none"/></svg>
<svg class="a" style="left:826.5px;top:810px" width="20" height="20" viewBox="0 0 20 20"><rect x="0" y="0" width="20" height="20" rx="1.5" fill="#c0392b"/><rect x="2" y="2" width="16" height="16" fill="#f3d2ca"/><path d="M2 18l6-8 3 3 4-7 3 12z" fill="#d0604c"/><circle cx="6" cy="6" r="1.8" fill="#d0604c"/></svg>
<svg class="a" style="left:868px;top:803px" width="30" height="30" viewBox="0 0 30 30"><rect x="0" y="6" width="23" height="23" rx="2" fill="#ea5a35"/><path d="M16 11.5h-6a3 3 0 0 0 0 6h3a3 3 0 0 1 0 6H6" stroke="#fff" stroke-width="3" fill="none"/><circle cx="21" cy="8.5" r="7" fill="#e35a4e" stroke="#c04a3f" stroke-width="0.8"/></svg>
<svg class="a" style="left:911.5px;top:812px" width="21" height="16" viewBox="0 0 21 16"><rect x="0" y="0" width="21" height="16" fill="#0c0c0c" stroke="#666" stroke-width="0.8"/><path d="M2 3h5" stroke="#bbb" stroke-width="0.8"/></svg>
<div class="a" style="left:704.5px;top:836.2px;width:6.5px;height:2.6px;border-radius:1.5px;background:#6f7782"></div>
<div class="a" style="left:790.5px;top:836.2px;width:6.5px;height:2.6px;border-radius:1.5px;background:#6f7782"></div>
<div class="a" style="left:833.5px;top:836.2px;width:6.5px;height:2.6px;border-radius:1.5px;background:#6f7782"></div>
<div class="a" style="left:876.5px;top:836.2px;width:6.5px;height:2.6px;border-radius:1.5px;background:#6f7782"></div>
<div class="a" style="left:918.5px;top:836.2px;width:6.5px;height:2.6px;border-radius:1.5px;background:#6f7782"></div>
<svg class="a" style="left:1336px;top:816px" width="13" height="8" viewBox="0 0 13 8"><path d="M0.8 7.2L6.5 1.5l5.7 5.7" stroke="#1b1b1b" stroke-width="1.3" fill="none"/></svg>
<svg class="a" style="left:1359px;top:812px" width="13" height="17" viewBox="0 0 13 17"><rect x="3" y="0.5" width="7" height="12" rx="3" fill="#0a0a0a"/><path d="M1.2 9c0 2.8 2.3 4.3 5.3 4.3s5.3-1.5 5.3-4.3" stroke="#888" stroke-width="1" fill="none"/><path d="M6.5 13.5v2.5M3.5 16h6" stroke="#777" stroke-width="1.1"/></svg>
<svg class="a" style="left:1381px;top:815px" width="18" height="11" viewBox="0 0 18 11"><rect x="1" y="2" width="15" height="8" rx="1" fill="#101010" stroke="#666" stroke-width="1"/><rect x="16" y="4.5" width="1.6" height="3" fill="#333"/><circle cx="2" cy="2" r="1.8" fill="#fff" stroke="#333" stroke-width="0.9"/></svg>
<svg class="a" style="left:1406px;top:813px" width="15" height="15" viewBox="0 0 15 15"><path d="M1.2 13A12 12 0 0 1 13.5 1.2M4 13.2A9.2 9.2 0 0 1 13.3 4M6.8 13.3A6.5 6.5 0 0 1 13.3 6.8" stroke="#333" stroke-width="1.1" fill="none"/><circle cx="11.6" cy="12.3" r="1.3" fill="#111"/></svg>
<svg class="a" style="left:1428px;top:812px" width="17" height="16" viewBox="0 0 17 16"><path d="M1 5.5h3l4-3.5v12l-4-3.5H1z" fill="none" stroke="#222" stroke-width="1.2"/><path d="M10.3 5.5a3 3 0 0 1 0 5M12.3 3.5a6 6 0 0 1 0 9" stroke="#222" stroke-width="1.1" fill="none"/><path d="M14.5 1.8a9 9 0 0 1 0 12.4" stroke="#aaa" stroke-width="1" fill="none"/></svg>
<svg class="a" style="left:1459px;top:812px" width="24" height="25" viewBox="0 0 24 25"><rect x="1" y="0.5" width="15.5" height="13" fill="#0b0b0b"/><path d="M4 4h9.5M4 7h9.5" stroke="#888" stroke-width="1"/><path d="M4 13.5v3l3-3" fill="#0b0b0b"/><circle cx="16" cy="16" r="7.3" fill="#e4e4e4" stroke="#9a9a9a" stroke-width="1"/><path d="M15.3 12.8l1.8-1v8.5" stroke="#222" stroke-width="1.6" fill="none"/></svg>
<div class="a" style="left:1495px;top:797px;width:1px;height:47px;background:#c3ccd6"></div>

<svg class="a" style="left:454.7px;top:427px" width="13" height="19" viewBox="0 0 13 19"><path d="M0.5 0.5V15.5L4 12L6.6 17.3L8.9 16.2L6.3 11.1H11.3z" fill="#fff" stroke="#111" stroke-width="1" stroke-linejoin="round"/></svg>
<svg class="a" style="left:1182.7px;top:193.5px" width="11" height="16" viewBox="0 0 13 19" preserveAspectRatio="none"><path d="M0.5 0.5V15.5L4 12L6.6 17.3L8.9 16.2L6.3 11.1H11.3z" fill="#fff" stroke="#111" stroke-width="1" stroke-linejoin="round"/></svg>
</body></html>
